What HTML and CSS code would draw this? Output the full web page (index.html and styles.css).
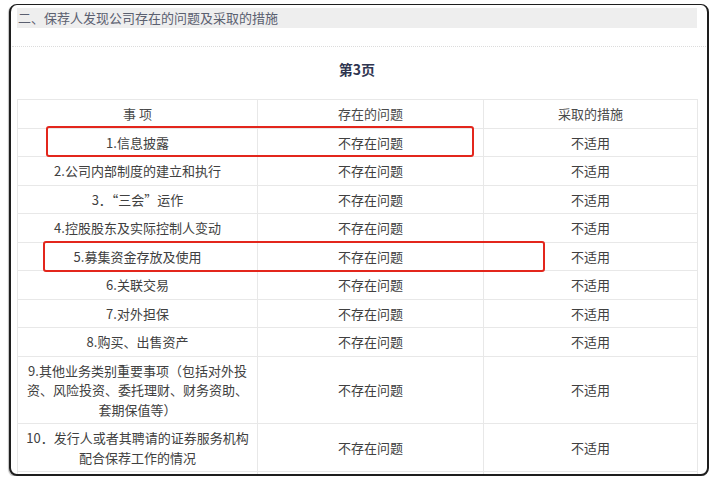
FILE: index.html
```html
<!DOCTYPE html>
<html lang="zh-CN">
<head>
<meta charset="utf-8">
<link rel="stylesheet" href="styles.css">
</head>
<body>
<div class="frame">
  <div class="section-bar">二、保荐人发现公司存在的问题及采取的措施</div>
  <div class="dotted"></div>
  <div class="page-title">第3页</div>
  <div class="table-wrap">
    <table class="grid">
      <colgroup>
        <col class="c1"><col class="c2"><col class="c3">
      </colgroup>
      <thead>
        <tr><th>事 项</th><th>存在的问题</th><th>采取的措施</th></tr>
      </thead>
      <tbody>
        <tr><td>1.信息披露</td><td>不存在问题</td><td>不适用</td></tr>
        <tr><td>2.公司内部制度的建立和执行</td><td>不存在问题</td><td>不适用</td></tr>
        <tr><td>3．“三会”运作</td><td>不存在问题</td><td>不适用</td></tr>
        <tr><td>4.控股股东及实际控制人变动</td><td>不存在问题</td><td>不适用</td></tr>
        <tr><td>5.募集资金存放及使用</td><td>不存在问题</td><td>不适用</td></tr>
        <tr><td>6.关联交易</td><td>不存在问题</td><td>不适用</td></tr>
        <tr><td>7.对外担保</td><td>不存在问题</td><td>不适用</td></tr>
        <tr><td>8.购买、出售资产</td><td>不存在问题</td><td>不适用</td></tr>
        <tr><td>9.其他业务类别重要事项（包括对外投<br>资、风险投资、委托理财、财务资助、<br>套期保值等）</td><td>不存在问题</td><td>不适用</td></tr>
        <tr><td>10．发行人或者其聘请的证券服务机构<br>配合保荐工作的情况</td><td>不存在问题</td><td>不适用</td></tr>
        <tr class="tail"><td></td><td></td><td></td></tr>
      </tbody>
    </table>
    <div class="mark mark-1"></div>
    <div class="mark mark-2"></div>
  </div>
</div>
</body>
</html>
```

FILE: styles.css
```css
* { box-sizing: border-box; }

html, body {
  margin: 0;
  padding: 0;
  background: #ffffff;
}

body {
  font-family: "Noto Sans CJK SC", "Noto Sans", sans-serif;
  color: #3a3a3a;
  font-size: 13px;
}

.frame {
  margin: 4px 0 0 9px;
  width: 700px;
  height: 472px;
  border: 2px solid #1e1e1e;
  border-top-width: 1px;
  border-radius: 8px;
  padding: 3px 10px 0 6px;
  overflow: hidden;
  background: #ffffff;
  box-shadow: -1px 1px 1px rgba(0, 0, 0, 0.25);
}

.section-bar {
  height: 20px;
  line-height: 20px;
  padding-left: 1px;
  background: #eeeeee;
  color: #5b6070;
  font-size: 13px;
}

.dotted {
  margin: 18px -9px 0 -5px;
  border-top: 1px dotted #dcdcdc;
}

.page-title {
  margin: 12px 0 20px;
  line-height: 20px;
  text-align: center;
  font-weight: bold;
  font-size: 14px;
  color: #2f3550;
}

.table-wrap {
  position: relative;
  width: 680px;
}

.grid {
  width: 680px;
  border-collapse: collapse;
  table-layout: fixed;
}

.c1 { width: 240px; }
.c2 { width: 226px; }
.c3 { width: 214px; }

.grid th,
.grid td {
  border: 1px solid #e8e8e8;
  padding: 4px 3px;
  line-height: 19.5px;
  text-align: center;
  vertical-align: middle;
  font-weight: normal;
  color: #404040;
  white-space: nowrap;
}

.grid th {
  color: #4a4a4a;
}

.grid .tail td {
  height: 28px;
}

.mark {
  position: absolute;
  border: 2.5px solid #e3261c;
  border-radius: 3px;
  pointer-events: none;
}

.mark-1 {
  left: 29px;
  top: 27px;
  width: 428px;
  height: 31px;
}

.mark-2 {
  left: 26px;
  top: 142px;
  width: 502px;
  height: 31px;
}
```
